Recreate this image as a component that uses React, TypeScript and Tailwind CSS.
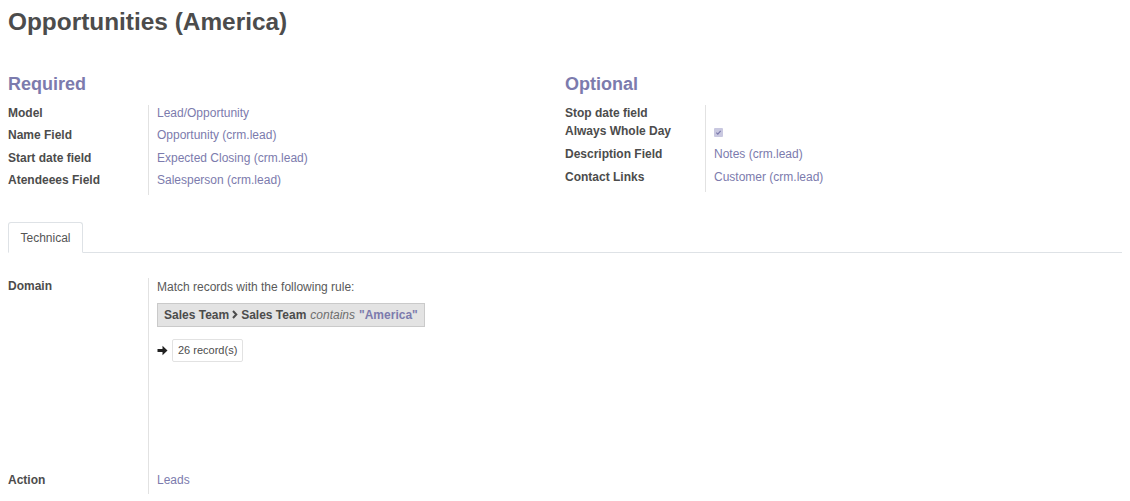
import React from "react";

const font = { fontFamily: '"Liberation Sans", Arial, Helvetica, sans-serif' };

function Row({ label, children, h = "h-[22.67px]" }: { label: string; children?: React.ReactNode; h?: string }) {
  return (
    <div className={`flex ${h}`}>
      <div className="w-[140px] shrink-0 font-bold text-[#4c4c4c] leading-[17px]">{label}</div>
      <div className="flex-1 border-l border-[#e2e2e2] pl-[8px] leading-[17px]">{children}</div>
    </div>
  );
}

function Link({ children }: { children: React.ReactNode }) {
  return <span className="text-[#7c7bad]">{children}</span>;
}

export default function App() {
  return (
    <div className="w-[1130px] h-[501px] bg-white overflow-hidden text-[12px] text-[#4c4c4c]" style={font}>
      <div className="pl-[8px] pr-[8px]">
        <h1 className="text-[24.4px] font-bold leading-[24px] pt-[10px] h-[34px] text-[#4c4c4c]">Opportunities (America)</h1>
        <div className="flex mt-[40px]">
          <div className="w-[557px]">
            <h2 className="text-[18px] font-bold text-[#7c7bad] leading-[20px] h-[30px]">Required</h2>
            <div className="pt-[0.5px]">
              <Row label="Model"><Link>Lead/Opportunity</Link></Row>
              <Row label="Name Field"><Link>Opportunity (crm.lead)</Link></Row>
              <Row label="Start date field"><Link>Expected Closing (crm.lead)</Link></Row>
              <Row label="Atendeees Field"><Link>Salesperson (crm.lead)</Link></Row>
            </div>
          </div>
          <div className="w-[557px]">
            <h2 className="text-[18px] font-bold text-[#7c7bad] leading-[20px] h-[30px]">Optional</h2>
            <div className="pt-[0.5px]">
              <Row label="Stop date field" h="h-[18px]" />
              <Row label="Always Whole Day" h="h-[23px]">
                <div className="h-[17px] flex items-center">
                  <span className="mt-[3px] w-[9px] h-[9px] bg-[#c9c8e0] rounded-[1px] flex items-center justify-center">
                    <svg width="7" height="7" viewBox="0 0 8 8">
                      <path d="M1.5 4.2 L3.2 5.8 L6.5 2.2" stroke="#7c7bad" strokeWidth="1.4" fill="none" />
                    </svg>
                  </span>
                </div>
              </Row>
              <Row label="Description Field" h="h-[23px]"><Link>Notes (crm.lead)</Link></Row>
              <Row label="Contact Links" h="h-[23px]"><Link>Customer (crm.lead)</Link></Row>
            </div>
          </div>
        </div>

        <div className="mt-[27px] flex border-b border-[#dee2e6] w-[1114px] h-[31px]">
          <div className="w-[75px] h-[31px] border border-[#dee2e6] border-b-white bg-white rounded-t-[3px] flex items-center justify-center text-[12px] text-[#555] -mb-[1px]">
            Technical
          </div>
        </div>

        <div className="mt-[25px]">
          <div className="flex h-[194px]">
            <div className="w-[140px] shrink-0 font-bold leading-[17px]">Domain</div>
            <div className="flex-1 border-l border-[#e2e2e2] pl-[8px] pt-[0.5px]">
              <div className="leading-[17px] text-[#5a5a5a]">Match records with the following rule:</div>
              <div className="mt-[7px] inline-flex items-center h-[24px] px-[6px] bg-[#e3e3e3] border border-[#cacaca] font-bold">
                <span>Sales Team</span>
                <svg className="mx-[3px]" width="6" height="9" viewBox="0 0 6 9">
                  <path d="M1 1 L4.3 4.5 L1 8" stroke="#4c4c4c" strokeWidth="2" fill="none" />
                </svg>
                <span>Sales Team</span>
                <span className="italic font-normal text-[#6e6e6e] ml-[4px]">contains</span>
                <span className="text-[#7c7bad] ml-[4px]">"America"</span>
              </div>
              <div className="mt-[12px] flex items-center">
                <svg width="11" height="11" viewBox="0 0 11 11">
                  <path d="M0.5 4 H5.5 V0.8 L10.5 5.5 L5.5 10.2 V7 H0.5 Z" fill="#222" />
                </svg>
                <span className="ml-[4px] h-[23px] px-[5px] border border-[#e2e2e2] rounded-[2px] flex items-center text-[11px] text-[#4c4c4c]">
                  26 record(s)
                </span>
              </div>
            </div>
          </div>
          <Row label="Action" h="h-[22px]"><Link>Leads</Link></Row>
        </div>
      </div>
    </div>
  );
}
